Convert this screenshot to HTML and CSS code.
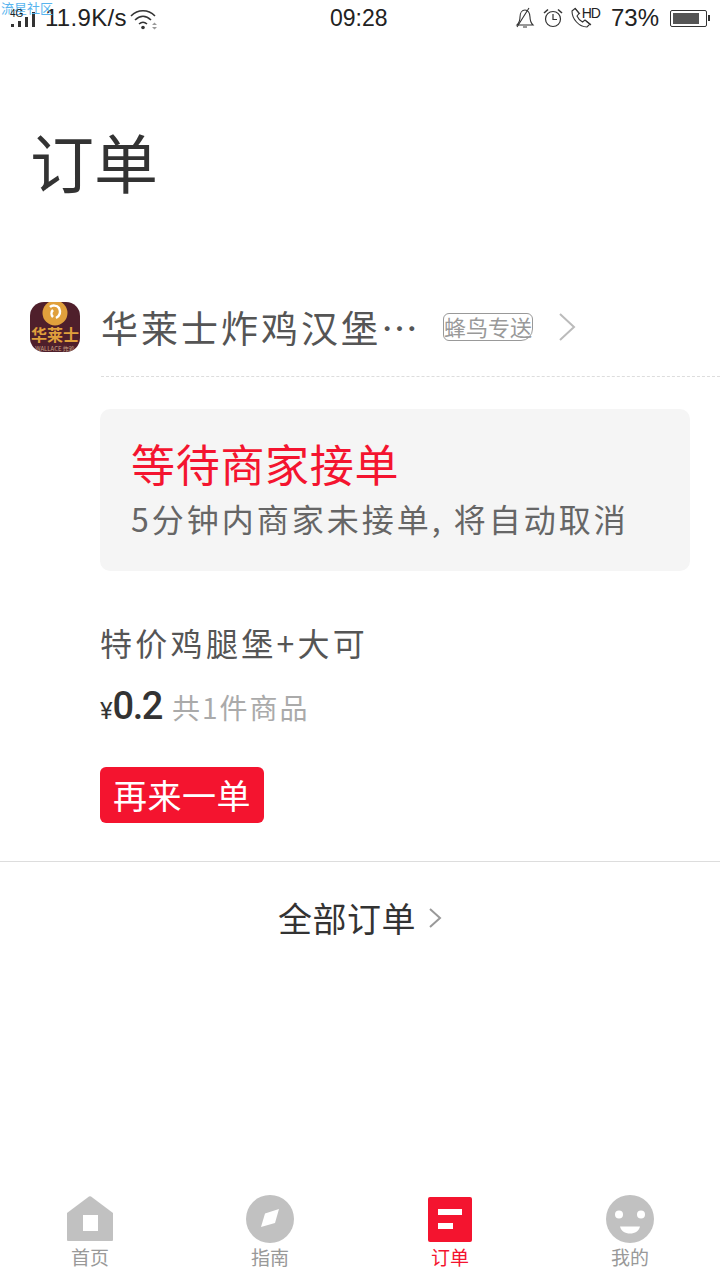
FILE: index.html
```html
<!DOCTYPE html>
<html lang="zh-CN">

<head>
    <meta charset="UTF-8">
    <meta name="viewport" content="width=device-width, initial-scale=1.0">
    <title>订单</title>
    <link rel="stylesheet" href="styles.css">
</head>

<body>
    <div class="page">
        <!-- 状态栏 -->
        <div class="status">
            <span class="mark">流星社区</span>
            <div class="status-left">
                <span class="tag4g">4G</span>
                <svg class="signal" width="26" height="18" viewBox="0 0 26 18">
                    <rect x="1" y="14" width="3" height="3" fill="#333" />
                    <rect x="8" y="11" width="3" height="6" fill="#333" />
                    <rect x="15" y="7" width="3" height="10" fill="#333" />
                    <rect x="22" y="2" width="3" height="15" fill="#333" />
                </svg>
                <span class="speed">11.9K/s</span>
                <svg class="wifi" width="28" height="22" viewBox="0 0 28 22" fill="none" stroke="#333" stroke-width="1.6">
                    <path d="M1 8c7-7 17-7 24 0" />
                    <path d="M5 12c5-5 11-5 16 0" />
                    <path d="M9 16c3-2.600 5-2.600 8 0" />
                    <circle cx="13" cy="19.500" r="1.800" fill="#333" stroke="none" />
                    <path d="M22 17l2.500-2.500 2.500 2.500zM22 19l2.500 2.500 2.500-2.500z" fill="#999" stroke="none" />
                </svg>
            </div>
            <span class="clock">09:28</span>
            <div class="status-right">
                <svg width="20" height="22" viewBox="0 0 20 22" fill="none" stroke="#333" stroke-width="1.100">
                    <path d="M2 18c2-2 3-4 3-8 0-4 2-7 5-7s5 3 5 7c0 4 1 6 3 8z" />
                    <path d="M8 20h4M2 20L14 1" />
                </svg>
                <svg class="alarm" width="20" height="20" viewBox="0 0 20 20" fill="none" stroke="#333" stroke-width="1.200">
                    <circle cx="10" cy="11" r="7.500" />
                    <path d="M10 6v5.500h4" />
                    <path d="M1 5l4-3.500M19 5l-4-3.500" stroke-width="1.600" />
                </svg>
                <svg class="call" width="22" height="22" viewBox="0 0 22 22" fill="none" stroke="#333" stroke-width="1.100">
                    <path d="M2 4l3-2.500 4 5-2 2.500c1 2.500 3 4.500 5.500 6l2.500-2 5 4-3 3C9 20 2 12 2 4z" />
                    <path d="M5 1l5 6M16 14l5 4" />
                </svg>
                <span class="hd">HD</span>
                <span class="percent">73%</span>
                <div class="battery"><div class="battery-fill"></div></div>
                <div class="battery-tip"></div>
            </div>
        </div>

        <h1 class="title">订单</h1>

        <!-- 订单卡片 -->
        <div class="order">
            <div class="shop">
                <div class="logo">
                    <svg class="logo-top" width="26" height="24" viewBox="0 0 26 24">
                        <circle cx="13" cy="11" r="12.500" fill="#e0a03c" />
                        <path d="M8 5c2-2 7-2 9 1 2 4 1 8-3 10M11 8c-2 2-2 5 0 7" fill="none" stroke="#fff" stroke-width="2.500" />
                    </svg>
                    <span class="logo-name">华莱士</span>
                    <span class="logo-sub">WALLACE 炸鸡</span>
                </div>
                <div class="shop-info">
                    <span class="shop-name">华莱士炸鸡汉堡⋯</span>
                    <span class="badge">蜂鸟专送</span>
                    <svg class="arrow" width="20" height="30" viewBox="0 0 20 30" fill="none" stroke="#bbb" stroke-width="2">
                        <path d="M3 2l14 13L3 28" />
                    </svg>
                </div>
            </div>
            <div class="detail">
                <div class="state">
                    <div class="state-title">等待商家接单</div>
                    <div class="state-desc">5分钟内商家未接单, 将自动取消</div>
                </div>
                <div class="goods">特价鸡腿堡+大可</div>
                <div class="price-row">
                    <span class="yen">¥</span><span class="price">0.2</span>
                    <span class="count">共1件商品</span>
                </div>
                <div class="again">再来一单</div>
            </div>
        </div>

        <div class="all">
            <span>全部订单</span>
            <svg width="14" height="22" viewBox="0 0 14 22" fill="none" stroke="#999" stroke-width="2">
                <path d="M2 2l10 9L2 20" />
            </svg>
        </div>

        <!-- 底部导航 -->
        <div class="tabs">
            <div class="tab">
                <svg class="ic-home" width="46" height="46" viewBox="0 0 46 46">
                    <path d="M22 .500a2 2 0 0 1 2 0L46 17V44a1 1 0 0 1-1 1H1a1 1 0 0 1-1-1V17z" fill="#c1c1c1" />
                    <rect x="16" y="19" width="15" height="16" fill="#fff" />
                </svg>
                <span>首页</span>
            </div>
            <div class="tab">
                <svg class="ic-round" width="48" height="48" viewBox="0 0 48 48">
                    <circle cx="24" cy="24" r="24" fill="#c1c1c1" />
                    <path d="M33 14L19 18.500 15 32l14-4z" fill="#fff" />
                </svg>
                <span>指南</span>
            </div>
            <div class="tab on">
                <svg class="ic-order" width="44" height="45" viewBox="0 0 44 45">
                    <rect width="44" height="45" rx="2" fill="#f4142f" />
                    <rect x="10" y="12" width="24" height="6" fill="#fff" />
                    <rect x="10" y="26" width="15" height="6" fill="#fff" />
                </svg>
                <span>订单</span>
            </div>
            <div class="tab">
                <svg class="ic-round" width="48" height="48" viewBox="0 0 48 48">
                    <circle cx="24" cy="24" r="24" fill="#c1c1c1" />
                    <circle cx="13" cy="19.500" r="4" fill="#fff" />
                    <circle cx="35" cy="19.500" r="4" fill="#fff" />
                    <path d="M14 31.500h20c-1 4.500-5 7-10 7s-9-2.500-10-7z" fill="#fff" />
                </svg>
                <span>我的</span>
            </div>
        </div>
    </div>
</body>

</html>
```

FILE: styles.css
```css
* {
    box-sizing: border-box;
}

html,
body {
    margin: 0;
    background: #fff;
}

body {
    font-family: "Noto Sans CJK SC", "Liberation Sans", sans-serif;
}

.page {
    position: relative;
    width: 720px;
    height: 1280px;
    display: flex;
    flex-direction: column;
    overflow: hidden;
}

/* 状态栏 */
.status {
    position: relative;
    height: 36px;
    display: flex;
    align-items: center;
    justify-content: space-between;
    padding: 0 10px;
    color: #222;
    font-family: "Liberation Sans", sans-serif;
    font-size: 24px;
}

.mark {
    position: absolute;
    top: 0;
    left: 1px;
    font-family: "Noto Sans CJK SC", sans-serif;
    font-size: 13px;
    line-height: 16px;
    color: #58b4ee;
}

.tag4g {
    position: absolute;
    top: 9px;
    left: 10px;
    font-size: 10px;
    line-height: 10px;
}

.status-left {
    display: flex;
    align-items: center;
    width: 200px;
}

.signal {
    margin-top: 2px;
    margin-right: 9px;
}

.speed {
    letter-spacing: .3px;
    line-height: 36px;
}

.wifi {
    margin-left: 3px;
    margin-top: 2px;
}

.clock {
    position: absolute;
    left: 330px;
    top: 0;
    font-size: 23px;
    line-height: 37px;
}

.status-right {
    display: flex;
    align-items: center;
}

.alarm {
    margin-left: 8px;
}

.call {
    margin-left: 7px;
}

.hd {
    font-size: 14px;
    letter-spacing: -1px;
    margin: -10px 0 0 -10px;
}

.percent {
    margin-left: 11px;
}

.battery {
    width: 37px;
    height: 17px;
    margin-left: 11px;
    padding: 2px;
    border: 1px solid #333;
    border-radius: 2px;
}

.battery-fill {
    width: 26px;
    height: 100%;
    background: #555;
}

.battery-tip {
    width: 2px;
    height: 6px;
    margin-left: 1px;
    background: #333;
}

.title {
    margin: 79px 0 0 30px;
    font-size: 64px;
    font-weight: 400;
    line-height: 90px;
    color: #333;
}

/* 订单 */
.order {
    margin-top: 69px;
    padding-left: 30px;
}

.shop {
    display: flex;
}

.logo {
    width: 50px;
    height: 50px;
    margin-top: 28px;
    flex: none;
    display: flex;
    flex-direction: column;
    align-items: center;
    overflow: hidden;
    border-radius: 14px;
    background: #4f1f2b;
}

.logo-top {
    flex: none;
}

.logo-name {
    font-size: 16px;
    font-weight: 700;
    line-height: 17px;
    color: #e0a03c;
    white-space: nowrap;
}

.logo-sub {
    margin-top: 2px;
    font-size: 6px;
    line-height: 7px;
    color: #c9a184;
    white-space: nowrap;
}

.shop-info {
    flex: 1;
    height: 103px;
    margin-left: 21px;
    padding-top: 3px;
    display: flex;
    align-items: center;
    border-bottom: 1px dashed #ddd;
}

.shop-name {
    width: 342px;
    font-size: 37px;
    letter-spacing: 3px;
    line-height: 50px;
    color: #555;
    white-space: nowrap;
}

.badge {
    width: 90px;
    height: 28px;
    border: 1px solid #999;
    border-radius: 6px 6px 12px 6px;
    font-size: 22px;
    line-height: 25px;
    color: #999;
    white-space: nowrap;
}

.arrow {
    margin-left: 24px;
}

.detail {
    padding-left: 70px;
}

.state {
    width: 590px;
    height: 162px;
    margin-top: 32px;
    padding: 25px 31px;
    border-radius: 10px;
    background: #f5f5f5;
}

.state-title {
    font-size: 44px;
    letter-spacing: .7px;
    line-height: 58px;
    color: #f4142f;
}

.state-desc {
    margin-top: 4px;
    font-size: 32px;
    letter-spacing: 3px;
    line-height: 44px;
    color: #666;
}

.goods {
    margin-top: 47px;
    font-size: 32px;
    letter-spacing: 3.300px;
    line-height: 48px;
    color: #555;
}

.price-row {
    display: flex;
    align-items: baseline;
    margin-top: 16px;
    line-height: 48px;
    font-family: "Roboto", "Liberation Sans", sans-serif;
    color: #333;
}

.yen {
    font-size: 24px;
}

.price {
    font-size: 38px;
    font-weight: 500;
    letter-spacing: -1.500px;
}

.count {
    margin-left: 10px;
    font-family: "Noto Sans CJK SC", sans-serif;
    font-size: 28px;
    letter-spacing: 2px;
    color: #aaa;
}

.again {
    width: 164px;
    height: 56px;
    margin-top: 32px;
    border-radius: 6px;
    background: #f4142f;
    color: #fff;
    font-size: 34px;
    letter-spacing: .5px;
    line-height: 56px;
    text-align: center;
}

.all {
    height: 116px;
    margin-top: 38px;
    padding-bottom: 4px;
    border-top: 1px solid #ddd;
    display: flex;
    align-items: center;
    justify-content: center;
    gap: 12px;
    font-size: 34px;
    letter-spacing: .5px;
    color: #333;
}

/* 底部导航 */
.tabs {
    margin-top: auto;
    height: 96px;
    display: flex;
}

.tab {
    flex: 1;
    display: flex;
    flex-direction: column;
    align-items: center;
    justify-content: flex-end;
    padding-bottom: 10px;
    font-size: 19px;
    line-height: 26px;
    color: #999;
}

.ic-home {
    margin-bottom: 2px;
}

.ic-round {
    margin-bottom: 1px;
}

.ic-order {
    margin-bottom: 2px;
}

.tab.on {
    color: #f4142f;
}
```
